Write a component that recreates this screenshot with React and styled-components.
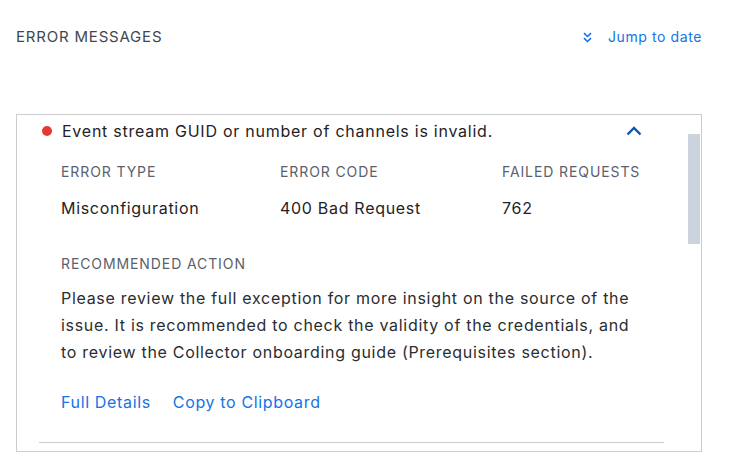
import React from "react";
import styled, { createGlobalStyle } from "styled-components";

const Global = createGlobalStyle`
  html, body { margin: 0; padding: 0; background: #fff; }
  body { font-family: Inter, "Noto Sans", Arial, sans-serif; -webkit-font-smoothing: antialiased; }
  * { box-sizing: border-box; }
`;

const Page = styled.div`
  width: 746px;
  padding: 27px 44px 0 16px;
`;

const Header = styled.div`
  display: flex;
  align-items: center;
  justify-content: space-between;
  height: 20px;
  margin-bottom: 67px;
`;

const SectionTitle = styled.h2`
  margin: 0;
  font-size: 15px;
  font-weight: 400;
  line-height: 20px;
  color: #3f4652;
  letter-spacing: 0.8px;
`;

const JumpLink = styled.a`
  display: flex;
  align-items: center;
  gap: 16px;
  font-size: 14px;
  line-height: 20px;
  letter-spacing: 0.6px;
  color: #1473e6;
  text-decoration: none;
  cursor: pointer;
`;

const Card = styled.div`
  position: relative;
  height: 338px;
  border: 1px solid #cccccc;
  overflow: hidden;
`;

const ScrollThumb = styled.div`
  position: absolute;
  top: 19px;
  right: 1px;
  width: 12px;
  height: 110px;
  background: #cbd3dc;
`;

const Item = styled.div`
  margin: 0 37px 0 22px;
  padding-bottom: 29px;
  border-bottom: 1px solid #cccccc;
`;

const ItemHeader = styled.div`
  display: flex;
  align-items: center;
  padding: 5px 22px 0 3px;
  height: 27px;
`;

const Dot = styled.span`
  width: 10px;
  height: 10px;
  border-radius: 50%;
  background: #e53935;
  flex: none;
  margin-right: 10px;
`;

const ItemTitle = styled.div`
  flex: 1;
  font-size: 16px;
  line-height: 22px;
  letter-spacing: 0.75px;
  color: #1f2226;
`;

const Body = styled.div`
  padding: 21px 0 0 22px;
`;

const Grid = styled.div`
  display: grid;
  grid-template-columns: 219px 222px 1fr;
  row-gap: 16px;
`;

const Label = styled.div`
  font-size: 14px;
  line-height: 18px;
  color: #5a616c;
  text-transform: uppercase;
  letter-spacing: 0.9px;
  margin-top: ${(p) => p.$mt || 0}px;
`;

const Value = styled.div`
  font-size: 16px;
  line-height: 22px;
  letter-spacing: 0.7px;
  color: #1f2226;
`;

const Paragraph = styled.p`
  margin: 12px 0 0;
  font-size: 16px;
  line-height: 27px;
  letter-spacing: 0.7px;
  color: #2a2d31;
  max-width: 580px;
`;

const Actions = styled.div`
  display: flex;
  gap: 22px;
  margin-top: 25px;
`;

const ActionLink = styled.a`
  font-size: 16px;
  line-height: 22px;
  letter-spacing: 0.65px;
  color: #1473e6;
  cursor: pointer;
  text-decoration: none;
`;

const IconBtn = styled.button`
  display: flex;
  border: 0;
  background: none;
  padding: 0;
  cursor: pointer;
`;

export default function App() {
  return (
    <>
      <Global />
      <Page>
        <Header>
          <SectionTitle>ERROR MESSAGES</SectionTitle>
          <JumpLink>
            <svg width="9" height="11" viewBox="0 0 9 11" fill="none">
              <path d="M1 1.2 L4.5 4.5 L8 1.2" stroke="#1473e6" strokeWidth="1.6" />
              <path d="M1 6.2 L4.5 9.5 L8 6.2" stroke="#1473e6" strokeWidth="1.6" />
            </svg>
            Jump to date
          </JumpLink>
        </Header>
        <Card>
          <Item>
            <ItemHeader>
              <Dot />
              <ItemTitle>Event stream GUID or number of channels is invalid.</ItemTitle>
              <IconBtn aria-label="Collapse">
                <svg width="16" height="10" viewBox="0 0 16 10" fill="none">
                  <path d="M1.5 8.5 L8 2 L14.5 8.5" stroke="#0b57b0" strokeWidth="2.4" />
                </svg>
              </IconBtn>
            </ItemHeader>
            <Body>
              <Grid>
                <Label>Error Type</Label>
                <Label>Error Code</Label>
                <Label>Failed Requests</Label>
                <Value>Misconfiguration</Value>
                <Value>400 Bad Request</Value>
                <Value>762</Value>
              </Grid>
              <Label $mt={36}>Recommended Action</Label>
              <Paragraph>
                Please review the full exception for more insight on the source of the issue. It is
                recommended to check the validity of the credentials, and to review the Collector
                onboarding guide (Prerequisites section).
              </Paragraph>
              <Actions>
                <ActionLink>Full Details</ActionLink>
                <ActionLink>Copy to Clipboard</ActionLink>
              </Actions>
            </Body>
          </Item>
          <ScrollThumb />
        </Card>
      </Page>
    </>
  );
}
